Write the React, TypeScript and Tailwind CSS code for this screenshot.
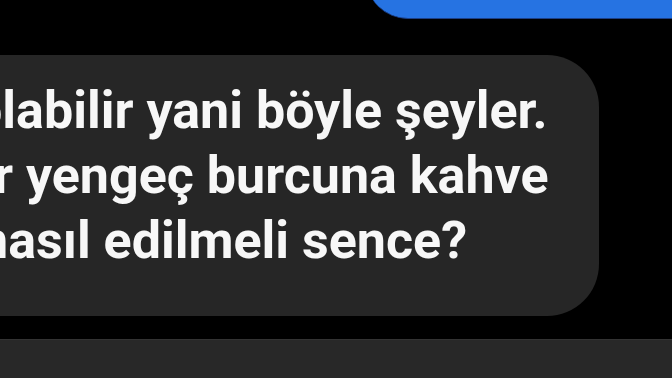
import React from "react";

const lines = [
  { text: "olabilir yani böyle şeyler.", offset: "-ml-[27px]" },
  { text: "Bir yengeç burcuna kahve", offset: "-ml-[53px]" },
  { text: "nasıl edilmeli sence?", offset: "-ml-[21px]" },
];

const App: React.FC = () => {
  return (
    <div
      className="w-[672px] h-[378px] bg-black overflow-hidden flex flex-col"
      style={{ fontFamily: "Roboto, 'Liberation Sans', sans-serif" }}
    >
      {/* Sent message, mostly above the fold */}
      <div className="ml-[366px] -mt-[60px] h-[79px] shrink-0 bg-[#2673e2] rounded-bl-[42px] border-b border-[#1c3f86]" />

      {/* Received message */}
      <div className="mt-[36px] w-[599px] h-[261px] shrink-0 bg-[#262626] rounded-r-[52px] overflow-hidden pt-[23px]">
        {lines.map((line) => (
          <div
            key={line.text}
            className={`${line.offset} whitespace-nowrap text-[52px] leading-[65px] font-bold text-[#f7f7f7]`}
          >
            {line.text}
          </div>
        ))}
      </div>

      {/* Composer bar */}
      <div className="mt-[23px] flex-1 bg-[#282828] border-t border-[#333333]" />
    </div>
  );
};

export default App;
